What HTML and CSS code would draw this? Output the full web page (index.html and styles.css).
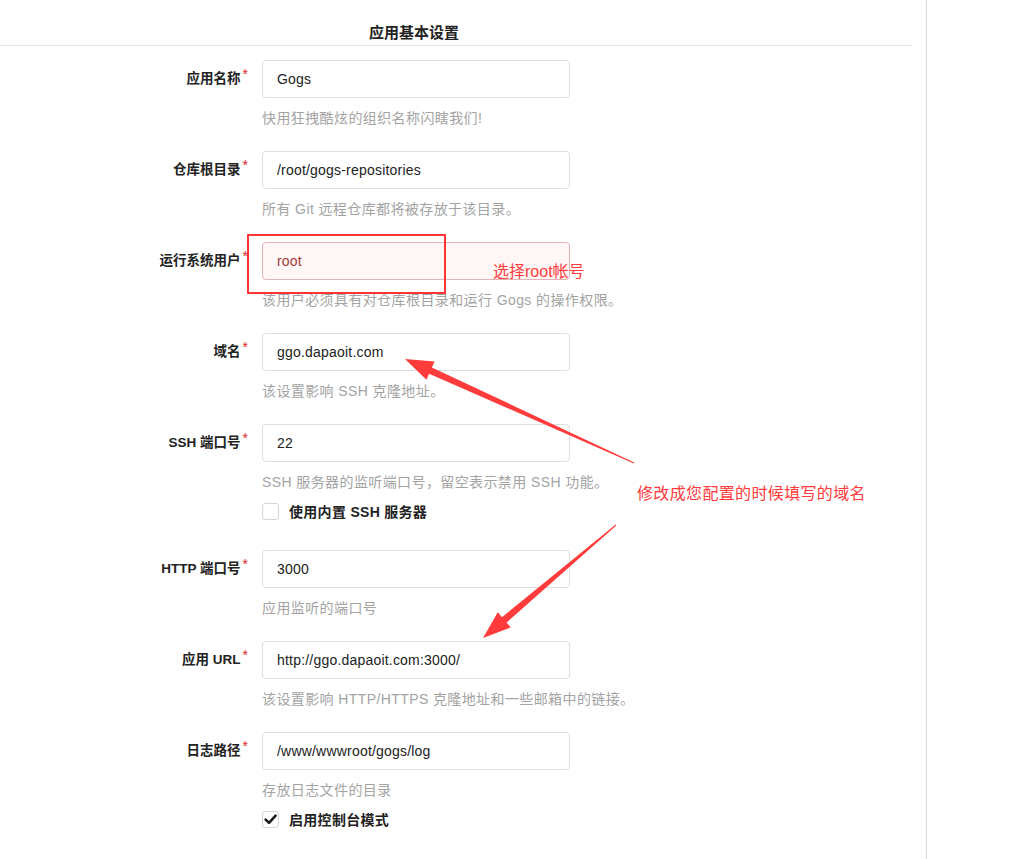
FILE: index.html
```html
<!DOCTYPE html>
<html lang="zh-CN">
<head>
<meta charset="utf-8">
<title>安装 - Gogs</title>
<link rel="stylesheet" href="styles.css">
</head>
<body>
<div class="page">
  <main class="panel">
    <h3 class="panel-title">应用基本设置</h3>
    <form class="form">
      <div class="field">
        <label class="field-label">应用名称</label>
        <div class="field-body">
          <input class="text-input" type="text" value="Gogs">
          <p class="help">快用狂拽酷炫的组织名称闪瞎我们!</p>
        </div>
      </div>
      <div class="field">
        <label class="field-label">仓库根目录</label>
        <div class="field-body">
          <input class="text-input" type="text" value="/root/gogs-repositories">
          <p class="help">所有 Git 远程仓库都将被存放于该目录。</p>
        </div>
      </div>
      <div class="field">
        <label class="field-label">运行系统用户</label>
        <div class="field-body">
          <input class="text-input is-error" type="text" value="root">
          <p class="help">该用户必须具有对仓库根目录和运行 Gogs 的操作权限。</p>
        </div>
      </div>
      <div class="field">
        <label class="field-label">域名</label>
        <div class="field-body">
          <input class="text-input" type="text" value="ggo.dapaoit.com">
          <p class="help">该设置影响 SSH 克隆地址。</p>
        </div>
      </div>
      <div class="field">
        <label class="field-label">SSH 端口号</label>
        <div class="field-body">
          <input class="text-input" type="text" value="22">
          <p class="help">SSH 服务器的监听端口号，留空表示禁用 SSH 功能。</p>
          <div class="check-row">
            <span class="check-box"></span>
            <span class="check-label">使用内置 SSH 服务器</span>
          </div>
        </div>
      </div>
      <div class="field">
        <label class="field-label">HTTP 端口号</label>
        <div class="field-body">
          <input class="text-input" type="text" value="3000">
          <p class="help">应用监听的端口号</p>
        </div>
      </div>
      <div class="field">
        <label class="field-label">应用 URL</label>
        <div class="field-body">
          <input class="text-input" type="text" value="http://ggo.dapaoit.com:3000/">
          <p class="help">该设置影响 HTTP/HTTPS 克隆地址和一些邮箱中的链接。</p>
        </div>
      </div>
      <div class="field">
        <label class="field-label">日志路径</label>
        <div class="field-body">
          <input class="text-input" type="text" value="/www/wwwroot/gogs/log">
          <p class="help">存放日志文件的目录</p>
          <div class="check-row">
            <span class="check-box is-checked">
              <svg viewBox="0 0 17 17" width="17" height="17"><path d="M3.6 8.6 L7 11.8 L13.6 4.6" fill="none" stroke="#1b1c1d" stroke-width="2.6" stroke-linecap="round" stroke-linejoin="round"/></svg>
            </span>
            <span class="check-label">启用控制台模式</span>
          </div>
        </div>
      </div>
    </form>
  </main>

  <!-- hand-drawn notes on top of the form -->
  <div class="note-box"></div>
  <span class="note note-user">选择root帐号</span>
  <span class="note note-domain">修改成您配置的时候填写的域名</span>
  <svg class="note-arrows" viewBox="0 0 1024 859" width="1024" height="859">
    <polygon fill="#ff3b3b" points="405,359 434.6,361.5 431.9,367.4 634.2,462.5 633.8,463.5 429.1,373.8 426.4,379.7"/>
    <polygon fill="#ff3b3b" points="483,638 497.8,612.3 502.0,617.2 615.7,524.6 616.3,525.4 506.6,622.6 510.8,627.5"/>
  </svg>
</div>
</body>
</html>
```

FILE: styles.css
```css
* {
  box-sizing: border-box;
}

html, body {
  margin: 0;
  padding: 0;
  background: #ffffff;
}

body {
  font-family: "Liberation Sans", "Noto Sans CJK SC", sans-serif;
  color: #333333;
  font-size: 14px;
}

.page {
  position: relative;
  width: 1024px;
  height: 859px;
  overflow: hidden;
}

.panel {
  width: 927px;
  height: 859px;
  border-right: 1px solid #dcdcdc;
}

.panel-title {
  margin: 0 14px 0 0;
  height: 46px;
  padding: 25px 0 0 369px;
  font-size: 15px;
  line-height: 16px;
  font-weight: 700;
  color: #222222;
  border-bottom: 1px solid #e6e6e6;
}

.form {
  padding-top: 14px;
}

.field {
  display: flex;
  align-items: flex-start;
  gap: 14px;
  margin-bottom: 23px;
}

.field-label {
  width: 248px;
  height: 38px;
  line-height: 38px;
  text-align: right;
  font-size: 13.5px;
  font-weight: 700;
  color: #222222;
}

.field-label::after {
  content: "*";
  display: inline-block;
  margin-left: 2px;
  color: #db2828;
  font-weight: 400;
  font-size: 14px;
  line-height: 1;
  vertical-align: 4px;
}

.field-body {
  display: flex;
  flex-direction: column;
  align-items: flex-start;
}

.text-input {
  width: 308px;
  height: 38px;
  margin: 0;
  padding: 0 14px;
  border: 1px solid #dededf;
  border-radius: 4px;
  background: #ffffff;
  font-family: "Liberation Sans", "Noto Sans CJK SC", sans-serif;
  font-size: 14px;
  letter-spacing: 0.2px;
  color: #222222;
  outline: none;
}

.text-input.is-error {
  background: #fff6f6;
  border-color: #e0b4b4;
  color: #9f3a38;
}

.help {
  margin: 10px 0 0;
  line-height: 20px;
  font-size: 14px;
  letter-spacing: 0.4px;
  color: #a3a3a3;
  white-space: nowrap;
}

.check-row {
  display: flex;
  align-items: center;
  gap: 10px;
  height: 20px;
  margin: 9px 0 6px;
}

.check-box {
  display: block;
  width: 17px;
  height: 17px;
  border: 1px solid #d4d4d5;
  border-radius: 3px;
  background: #ffffff;
  position: relative;
}

.check-box svg {
  position: absolute;
  left: -1px;
  top: -1px;
}

.check-label {
  font-size: 14px;
  font-weight: 700;
  letter-spacing: 0.3px;
  color: #222222;
}

/* notes layered over the form */
.note-box {
  position: absolute;
  left: 247px;
  top: 234px;
  width: 199px;
  height: 60px;
  border: 2px solid #ff3535;
}

.note {
  position: absolute;
  font-size: 16px;
  line-height: 20px;
  color: #ff3b3b;
  white-space: nowrap;
}

.note-user {
  left: 493px;
  top: 262px;
}

.note-domain {
  left: 637px;
  top: 484px;
  letter-spacing: 0.35px;
}

.note-arrows {
  position: absolute;
  left: 0;
  top: 0;
  pointer-events: none;
}
```
